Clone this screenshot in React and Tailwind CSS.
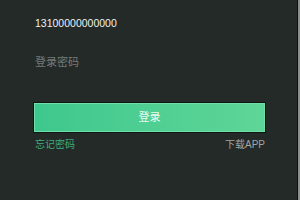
import React from 'react';

export default function App() {
  return (
    <div className="flex h-[200px] w-[300px] bg-[#232a28] font-['Liberation_Sans','Noto_Sans_CJK_SC',sans-serif]">
      <div className="flex flex-1 flex-col pl-[35px] pr-[32px]">
        {/* phone */}
        <div className="mt-[16px] h-[14px] text-[10.5px] leading-[14px] text-[#eef2f0]">13100000000000</div>
        {/* password placeholder */}
        <div className="mt-[25px] h-[14px] text-[11px] leading-[14px] text-[#767c7a]">登录密码</div>
        {/* login button */}
        <button className="mt-[34px] -ml-px flex h-[29px] w-[231px] items-center justify-center border border-[#6fe0aa] bg-gradient-to-r from-[#3ec78d] to-[#5ed697] text-[11px] text-[#eefaf4] shadow-[0_0_0_1px_#111614]">
          登录
        </button>
        <div className="mt-[7px] flex items-center justify-between text-[10px] leading-[12px]">
          <span className="text-[#3dae80]">忘记密码</span>
          <span className="text-[#a0a4a2]">下载APP</span>
        </div>
      </div>
      <div className="h-full w-[3px] border-l border-[#0e1211] bg-[#8c8f8e]" />
    </div>
  );
}
